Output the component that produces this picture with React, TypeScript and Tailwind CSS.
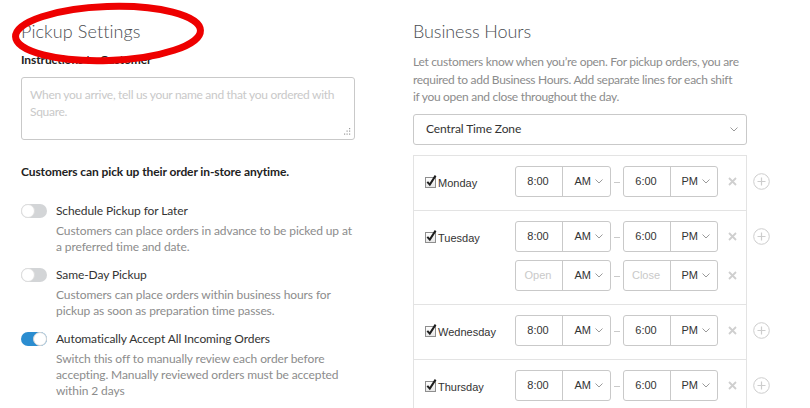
import React from "react";

const SANS = "font-['Lato',sans-serif] tracking-[-0.1px]";
const ARIAL = "font-['Liberation_Sans',Arial,sans-serif] tracking-normal";

function Toggle({ on }: { on: boolean }) {
  return on ? (
    <div className="w-[26px] h-[14px] rounded-full bg-[#2b8dd0] flex items-center justify-end shrink-0">
      <div className="w-[14px] h-[14px] rounded-full bg-white border border-[#d4d4d4]" />
    </div>
  ) : (
    <div className="w-[26px] h-[14px] rounded-full bg-[#d3d5d7] flex items-center shrink-0">
      <div className="w-[14px] h-[14px] rounded-full bg-white border border-[#dddddd]" />
    </div>
  );
}

function ToggleRow({ on, label, desc }: { on: boolean; label: string; desc: string }) {
  return (
    <div className="flex gap-[9px] items-start">
      <div className="mt-[1px]">
        <Toggle on={on} />
      </div>
      <div className="w-[299px]">
        <div className="text-[12px] leading-[16px] text-[#333]">{label}</div>
        <div className="mt-[4px] text-[12px] leading-[16px] text-[#8c8c8c]">{desc}</div>
      </div>
    </div>
  );
}

function Chevron() {
  return (
    <svg width="8" height="5" viewBox="0 0 8 5" className="shrink-0">
      <path d="M0.5 0.5 L4 4 L7.5 0.5" fill="none" stroke="#9a9a9a" strokeWidth="1" />
    </svg>
  );
}

function Checkbox() {
  return (
    <svg width="13" height="14" viewBox="0 0 13 14" className="shrink-0">
      <defs>
        <linearGradient id="cbg" x1="0" y1="0" x2="0" y2="1">
          <stop offset="0" stopColor="#ffffff" />
          <stop offset="1" stopColor="#e6e6e6" />
        </linearGradient>
      </defs>
      <rect x="0.5" y="3.5" width="10" height="10" fill="url(#cbg)" stroke="#8e8e8e" />
      <path d="M2.3 7.8 L4.8 10.6 L10.6 1.6" fill="none" stroke="#1e1e1e" strokeWidth="2" />
    </svg>
  );
}

function TimeGroup({ w, value, placeholder, ampm }: { w: number; value?: string; placeholder?: string; ampm: string }) {
  return (
    <div
      className={`flex h-[31px] border border-[#c9c9c9] rounded-[3px] ${w === 96 ? "w-[96px]" : "w-[95px]"}`}
    >
      <div
        className={`w-[47px] border-r border-[#c9c9c9] flex items-center justify-center pr-[2px] ${
          value ? "text-[#333]" : "text-[#c9c9c9]"
        }`}
      >
        {value ?? placeholder}
      </div>
      <div className="flex-1 flex items-center justify-end pr-[7px] gap-[4px] text-[#333]">
        <span>{ampm}</span>
        <Chevron />
      </div>
    </div>
  );
}

function XIcon() {
  return (
    <svg width="9" height="9" viewBox="0 0 9 9" className="shrink-0">
      <path d="M1 1 L8 8 M8 1 L1 8" stroke="#cfcfcf" strokeWidth="1.8" />
    </svg>
  );
}

function PlusIcon() {
  return (
    <svg width="17" height="17" viewBox="0 0 17 17">
      <circle cx="8.5" cy="8.5" r="7.8" fill="none" stroke="#cdcdcd" strokeWidth="1" />
      <path d="M8.5 4.5 V12.5 M4.5 8.5 H12.5" stroke="#cdcdcd" strokeWidth="1.2" />
    </svg>
  );
}

function TimeLine({ open, close }: { open?: string; close?: string }) {
  return (
    <div className="flex items-center">
      <TimeGroup w={96} value={open} placeholder="Open" ampm="AM" />
      <div className="w-[12px] flex justify-center">
        <div className="w-[6px] h-px bg-[#c9c9c9] mt-[2px]" />
      </div>
      <TimeGroup w={95} value={close} placeholder="Close" ampm="PM" />
      <div className="ml-[10px]">
        <XIcon />
      </div>
    </div>
  );
}

function DayRow({ day, extra }: { day: string; extra?: boolean }) {
  return (
    <div className="flex items-start">
      <div className="w-[334px] border-x border-b border-[#e3e3e3] pt-[10px] pb-[13px] pl-[11px] flex">
        <div className="w-[90px] h-[31px] flex items-center">
          <Checkbox />
          <span className="mt-[4px] text-[#333]">{day}</span>
        </div>
        <div className="flex flex-col gap-[8px]">
          <TimeLine open="8:00" close="6:00" />
          {extra && <TimeLine />}
        </div>
      </div>
      <div className="pt-[10px] pl-[6px] h-[41px] flex items-end">
        <div className="h-[31px] flex items-center">
          <PlusIcon />
        </div>
      </div>
    </div>
  );
}

export default function App() {
  return (
    <div className={`relative w-[810px] h-[408px] overflow-hidden bg-white flex ${SANS}`}>
      {/* Left column */}
      <div className="w-[355px] pl-[21px] pt-[19px] shrink-0">
        <h1 className="text-[18px] leading-[24px] font-light text-[#4a4d52] tracking-[0.1px]">Pickup Settings</h1>
        <div className="mt-[9px] text-[12px] leading-[16px] font-bold text-[#222]">Instructions to Customer</div>
        <div className="relative mt-[9px] w-[334px] h-[63px] border border-[#c9c9c9] rounded-[3px] pt-[8px] pl-[8px] pr-[4px] text-[12px] leading-[17px] text-[#c9c9c9] tracking-[-0.3px]">
          When you arrive, tell us your name and that you ordered with Square.
          <svg width="9" height="8" viewBox="0 0 9 8" className="absolute right-[3px] bottom-[3px]">
            <rect x="7" y="0" width="1.2" height="1.2" fill="#9a9a9a" />
            <rect x="4.5" y="2.5" width="1.2" height="1.2" fill="#9a9a9a" />
            <rect x="7" y="2.5" width="1.2" height="1.2" fill="#9a9a9a" />
            <rect x="2" y="5.5" width="1.2" height="1.2" fill="#9a9a9a" />
            <rect x="4.5" y="5.5" width="1.2" height="1.2" fill="#9a9a9a" />
            <rect x="7" y="5.5" width="1.2" height="1.2" fill="#9a9a9a" />
          </svg>
        </div>
        <div className="mt-[24px] text-[12px] leading-[16px] font-bold text-[#222]">
          Customers can pick up their order in-store anytime.
        </div>
        <div className="mt-[23px] flex flex-col gap-[12px]">
          <ToggleRow
            on={false}
            label="Schedule Pickup for Later"
            desc="Customers can place orders in advance to be picked up at a preferred time and date."
          />
          <ToggleRow
            on={false}
            label="Same-Day Pickup"
            desc="Customers can place orders within business hours for pickup as soon as preparation time passes."
          />
          <ToggleRow
            on={true}
            label="Automatically Accept All Incoming Orders"
            desc="Switch this off to manually review each order before accepting. Manually reviewed orders must be accepted within 2 days"
          />
        </div>
      </div>

      {/* Right column */}
      <div className="ml-[58px] pt-[19px]">
        <h2 className="text-[18px] leading-[24px] font-light text-[#4a4d52]">Business Hours</h2>
        <p className="mt-[10px] w-[345px] text-[12px] leading-[17.5px] text-[#8c8c8c] tracking-[-0.3px]">
          Let customers know when you&rsquo;re open. For pickup orders, you are
          <br />
          required to add Business Hours. Add separate lines for each shift
          <br />
          if you open and close throughout the day.
        </p>
        <div className="mt-[8px] w-[334px] h-[31px] border border-[#c9c9c9] rounded-[3px] flex items-center justify-between pl-[12px] pr-[8px] text-[12px] text-[#333]">
          <span>Central Time Zone</span>
          <Chevron />
        </div>
        <div className={`mt-[10px] text-[11px] ${ARIAL}`}>
          <div className="w-[334px] h-px bg-[#e3e3e3]" />
          <DayRow day="Monday" />
          <DayRow day="Tuesday" extra />
          <DayRow day="Wednesday" />
          <DayRow day="Thursday" />
        </div>
      </div>

      <svg className="absolute left-0 top-0 pointer-events-none" width="230" height="75" viewBox="0 0 230 75">
        <ellipse
          cx="108"
          cy="33.5"
          rx="92.5"
          ry="27"
          fill="none"
          stroke="#ee0000"
          strokeWidth="7"
          transform="rotate(-2 108 33.5)"
        />
      </svg>
    </div>
  );
}
